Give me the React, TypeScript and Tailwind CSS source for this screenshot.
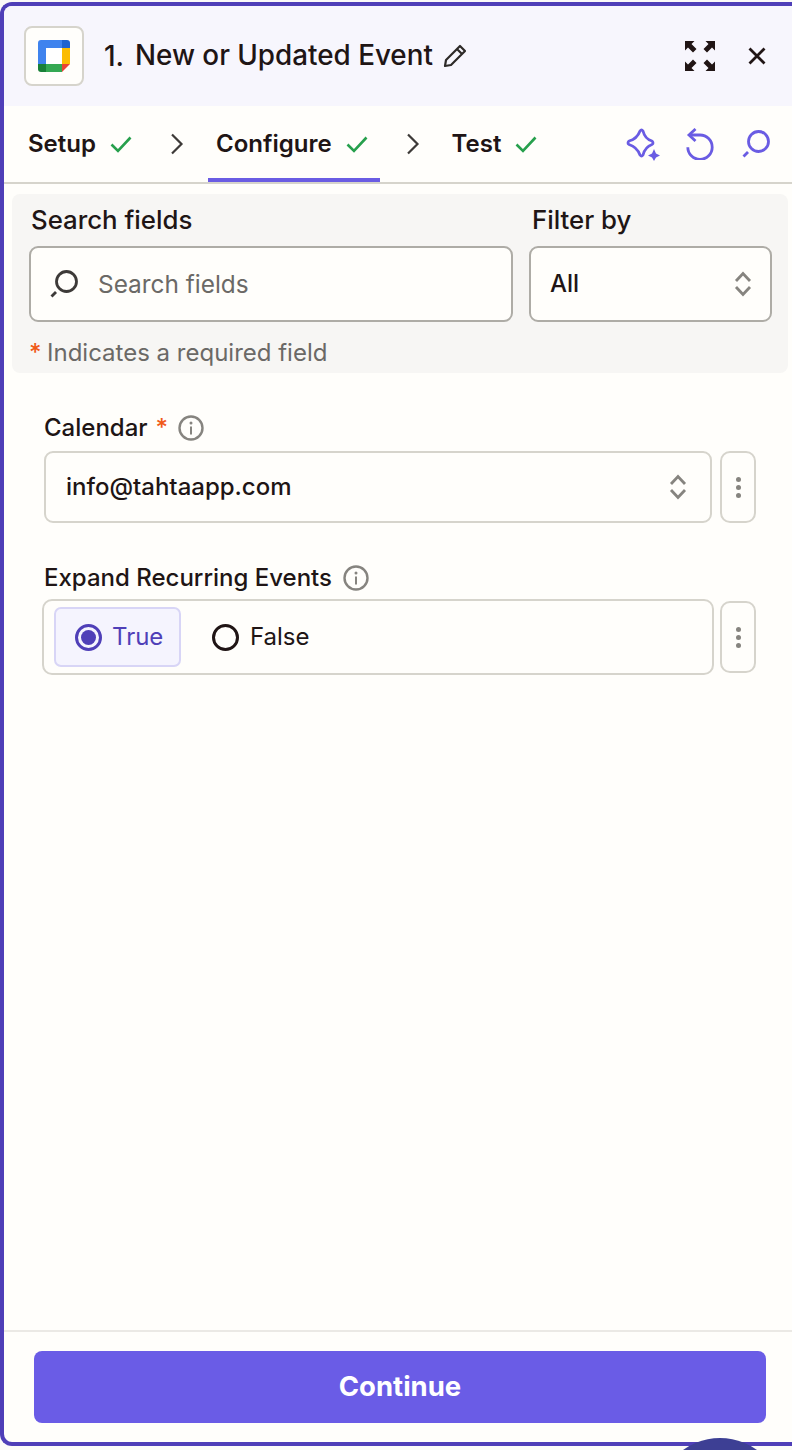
import React from "react";

const Check = () => (
  <svg width="22" height="18" viewBox="0 0 22 18" fill="none" className="shrink-0">
    <path d="M1.5 9.5 L8 16 L20.5 2.5" stroke="#27a04d" strokeWidth="2.6" />
  </svg>
);

const Chev = () => (
  <svg width="14" height="22" viewBox="0 0 14 22" fill="none" className="shrink-0">
    <path d="M2 1.5 L11.5 11 L2 20.5" stroke="#3d3a38" strokeWidth="2.2" />
  </svg>
);

const UpDown = () => (
  <svg width="18" height="26" viewBox="0 0 18 26" fill="none" className="shrink-0">
    <path d="M2 10 L9 2.5 L16 10 M2 16 L9 23.5 L16 16" stroke="#86847f" strokeWidth="2.8" />
  </svg>
);

const Info = () => (
  <svg width="26" height="26" viewBox="0 0 26 26" fill="none" className="shrink-0">
    <circle cx="13" cy="13" r="11.5" stroke="#86847f" strokeWidth="2.4" />
    <circle cx="13" cy="8" r="1.5" fill="#86847f" />
    <rect x="12" y="11.5" width="2" height="8" fill="#86847f" />
  </svg>
);

const Kebab = ({ className }: { className: string }) => (
  <div className={`w-[36px] h-[72px] shrink-0 border-2 border-[#d6d4cc] rounded-[10px] flex flex-col items-center justify-center gap-[3px] ${className}`}>
    <span className="w-[5px] h-[5px] rounded-full bg-[#86847f]" />
    <span className="w-[5px] h-[5px] rounded-full bg-[#86847f]" />
    <span className="w-[5px] h-[5px] rounded-full bg-[#86847f]" />
  </div>
);

const SearchIcon = ({ color, size }: { color: string; size: number }) => (
  <svg width={size} height={size} viewBox="0 0 28 28" fill="none" className="shrink-0">
    <circle cx="16.5" cy="11.5" r="10" stroke={color} strokeWidth="2.8" />
    <path d="M1.5 26.5 L6 22" stroke={color} strokeWidth="2.8" />
  </svg>
);

const GCal = () => (
  <svg width="32" height="32" viewBox="0 0 32 32" className="shrink-0">
    <path d="M24 0H3Q0 0 0 3V24H8V8H24Z" fill="#3f83ee" />
    <path d="M24 0H29Q32 0 32 3V8H24Z" fill="#1f63cf" />
    <rect x="24" y="8" width="8" height="16" fill="#fbbc04" />
    <rect x="8" y="24" width="16" height="8" fill="#34a853" />
    <path d="M0 24H8V32H3Q0 32 0 29Z" fill="#188038" />
    <path d="M24 24H32L24 32Z" fill="#ea4335" />
    <rect x="8" y="8" width="16" height="16" fill="#ffffff" />
  </svg>
);

export default function App() {
  return (
    <div className="relative w-[792px] h-[1450px] overflow-hidden bg-[#fbfaf8] font-['Inter',sans-serif] text-[#201515]">
      <div className="mt-[2px] h-[1444px] border-4 border-r-0 border-[#4f3fb8] rounded-l-[12px] bg-[#fffefb] flex flex-col overflow-hidden">
        {/* header */}
        <div className="h-[100px] shrink-0 bg-[#f7f6fd] flex items-center pl-[20px] pr-[26px]">
          <div className="w-[60px] h-[60px] shrink-0 bg-[#fffefb] border-2 border-[#d6d4cc] rounded-[8px] flex items-center justify-center">
            <GCal />
          </div>
          <div className="ml-[20px] w-[31px] text-[28px] font-medium leading-none whitespace-nowrap">1.</div>
          <div className="text-[27.8px] font-medium leading-none whitespace-nowrap">New or Updated Event</div>
          <svg width="24" height="24" viewBox="0 0 24 24" fill="none" className="ml-[10px] shrink-0">
            <path d="M2 22 L3 16 L17 2 L22 7 L8 21 Z M14 5 L19 10" stroke="#2d2a28" strokeWidth="2.2" strokeLinejoin="round" />
          </svg>
          <svg width="30" height="30" viewBox="0 0 30 30" fill="#201515" className="ml-auto shrink-0">
            <path d="M0 0H9.5L6.5 3L11.5 8L8 11.5L3 6.5L0 9.5Z" />
            <path d="M30 0H20.5L23.5 3L18.5 8L22 11.5L27 6.5L30 9.5Z" />
            <path d="M0 30H9.5L6.5 27L11.5 22L8 18.5L3 23.5L0 20.5Z" />
            <path d="M30 30H20.5L23.5 27L18.5 22L22 18.5L27 23.5L30 20.5Z" />
          </svg>
          <svg width="18" height="18" viewBox="0 0 18 18" fill="none" className="ml-[33px] shrink-0">
            <path d="M1.5 1.5L16.5 16.5 M16.5 1.5L1.5 16.5" stroke="#201515" strokeWidth="2.8" />
          </svg>
        </div>
        {/* tabs */}
        <div className="h-[78px] shrink-0 border-b-2 border-[#d6d4cc] flex items-stretch pl-[24px] pr-[22px] text-[24px] font-semibold">
          <div className="flex items-center">
            <span className="leading-none">Setup</span>
            <span className="ml-[14px]"><Check /></span>
            <span className="ml-[38px]"><Chev /></span>
          </div>
          <div className="relative flex items-center ml-[32px]">
            <span className="leading-none">Configure</span>
            <span className="ml-[14px]"><Check /></span>
            <span className="absolute left-[-8px] w-[172px] bottom-0 h-[4px] bg-[#6a5ce3]" />
            <span className="ml-[38px]"><Chev /></span>
          </div>
          <div className="flex items-center ml-[32px]">
            <span className="leading-none">Test</span>
            <span className="ml-[14px]"><Check /></span>
          </div>
          <div className="ml-auto flex items-center">
            <svg width="36" height="34" viewBox="0 0 36 34" fill="none" className="shrink-0">
              <path d="M14 3 Q15.5 1 17 3 Q19 11 26 13 Q28 15 26 16.5 Q19 19 17 27 Q15.5 29 14 27 Q11 19 3 16.5 Q1 15 3 13 Q11 11 14 3 Z" stroke="#6a5ce3" strokeWidth="2.8" strokeLinejoin="round" transform="translate(1 1)" />
              <path d="M29 22 L31 26.5 L35 28.5 L31 30.5 L29 34 L27 30.5 L23 28.5 L27 26.5 Z" fill="#6a5ce3" />
            </svg>
            <svg width="28" height="32" viewBox="0 0 28 32" fill="none" className="ml-[25px] shrink-0">
              <path d="M3 7 H14 A12.2 12.2 0 1 1 1.8 19.2" stroke="#6a5ce3" strokeWidth="2.8" />
              <path d="M9.5 1 L3 7 L9.5 13" stroke="#6a5ce3" strokeWidth="2.8" />
            </svg>
            <span className="ml-[28px]"><SearchIcon color="#6a5ce3" size={28} /></span>
          </div>
        </div>
        {/* search panel */}
        <div className="mt-[10px] ml-[8px] mr-[4px] h-[179px] shrink-0 bg-[#f7f6f4] rounded-[8px] pl-[17px] pr-[16px] pt-[11px]">
          <div className="flex gap-[16px]">
            <div className="w-[484px] shrink-0">
              <div className="text-[25.8px] font-medium leading-[30px] ml-[2px]">Search fields</div>
              <div className="mt-[11px] h-[76px] border-2 border-[#aeaca6] rounded-[9px] bg-[#fffefb] flex items-center pl-[19px]">
                <SearchIcon color="#3d3a38" size={28} />
                <span className="ml-[20px] text-[24.4px] leading-none text-[#6b6966]">Search fields</span>
              </div>
            </div>
            <div className="w-[243px] shrink-0">
              <div className="text-[25.8px] font-medium leading-[30px] ml-[3px]">Filter by</div>
              <div className="mt-[11px] h-[76px] border-2 border-[#aeaca6] rounded-[9px] bg-[#fffefb] flex items-center justify-between pl-[19px] pr-[18px]">
                <span className="text-[24px] leading-none font-medium">All</span>
                <UpDown />
              </div>
            </div>
          </div>
          <div className="mt-[17px] flex items-center text-[24px] leading-[28px] text-[#6b6966]">
            <span className="text-[#f05a18] w-[18px] font-medium">*</span>
            <span>Indicates a required field</span>
          </div>
        </div>
        {/* fields */}
        <div className="flex-1 pl-[40px] pr-[36px]">
          <div className="mt-[40px] flex items-center h-[30px] text-[24px] font-medium">
            <span className="leading-none">Calendar</span>
            <span className="ml-[8px] text-[#f05a18] leading-none">*</span>
            <span className="ml-[10px]"><Info /></span>
          </div>
          <div className="mt-[8px] flex gap-[8px]">
            <div className="w-[668px] h-[72px] border-2 border-[#d6d4cc] rounded-[9px] flex items-center justify-between pl-[20px] pr-[23px]">
              <span className="text-[24px] leading-none font-medium">info@tahtaapp.com</span>
              <UpDown />
            </div>
            <Kebab className="" />
          </div>
          <div className="mt-[40px] flex items-center h-[30px] text-[24px] font-medium">
            <span className="leading-none">Expand Recurring Events</span>
            <span className="ml-[11px]"><Info /></span>
          </div>
          <div className="mt-[6px] flex gap-[6px] -ml-[2px]">
            <div className="w-[672px] h-[76px] border-2 border-[#d6d4cc] rounded-[10px] flex items-center pl-[10px]">
              <div className="w-[127px] h-[60px] bg-[#f5f4fe] border-2 border-[#d8d5f6] rounded-[7px] flex items-center pl-[19px]">
                <span className="w-[27px] h-[27px] rounded-full border-[3px] border-[#4f3fb8] flex items-center justify-center">
                  <span className="w-[15px] h-[15px] rounded-full bg-[#4f3fb8]" />
                </span>
                <span className="ml-[10px] text-[24px] leading-none text-[#4f3fb8]">True</span>
              </div>
              <span className="ml-[31px] w-[27px] h-[27px] rounded-full border-[3px] border-[#201515]" />
              <span className="ml-[11px] text-[24px] leading-none">False</span>
            </div>
            <Kebab className="mt-[2px]" />
          </div>
        </div>
        {/* footer */}
        <div className="h-[112px] shrink-0 border-t-2 border-[#ebe9e5] pl-[30px] pr-[26px] pt-[19px]">
          <div className="h-[72px] rounded-[8px] bg-[#6a5ce6] flex items-center justify-center text-white text-[27.5px] font-bold">
            Continue
          </div>
        </div>
      </div>
      <div className="absolute left-[657px] top-[1438px] w-[126px] h-[126px] rounded-full bg-[#3d3f94]" />
    </div>
  );
}
